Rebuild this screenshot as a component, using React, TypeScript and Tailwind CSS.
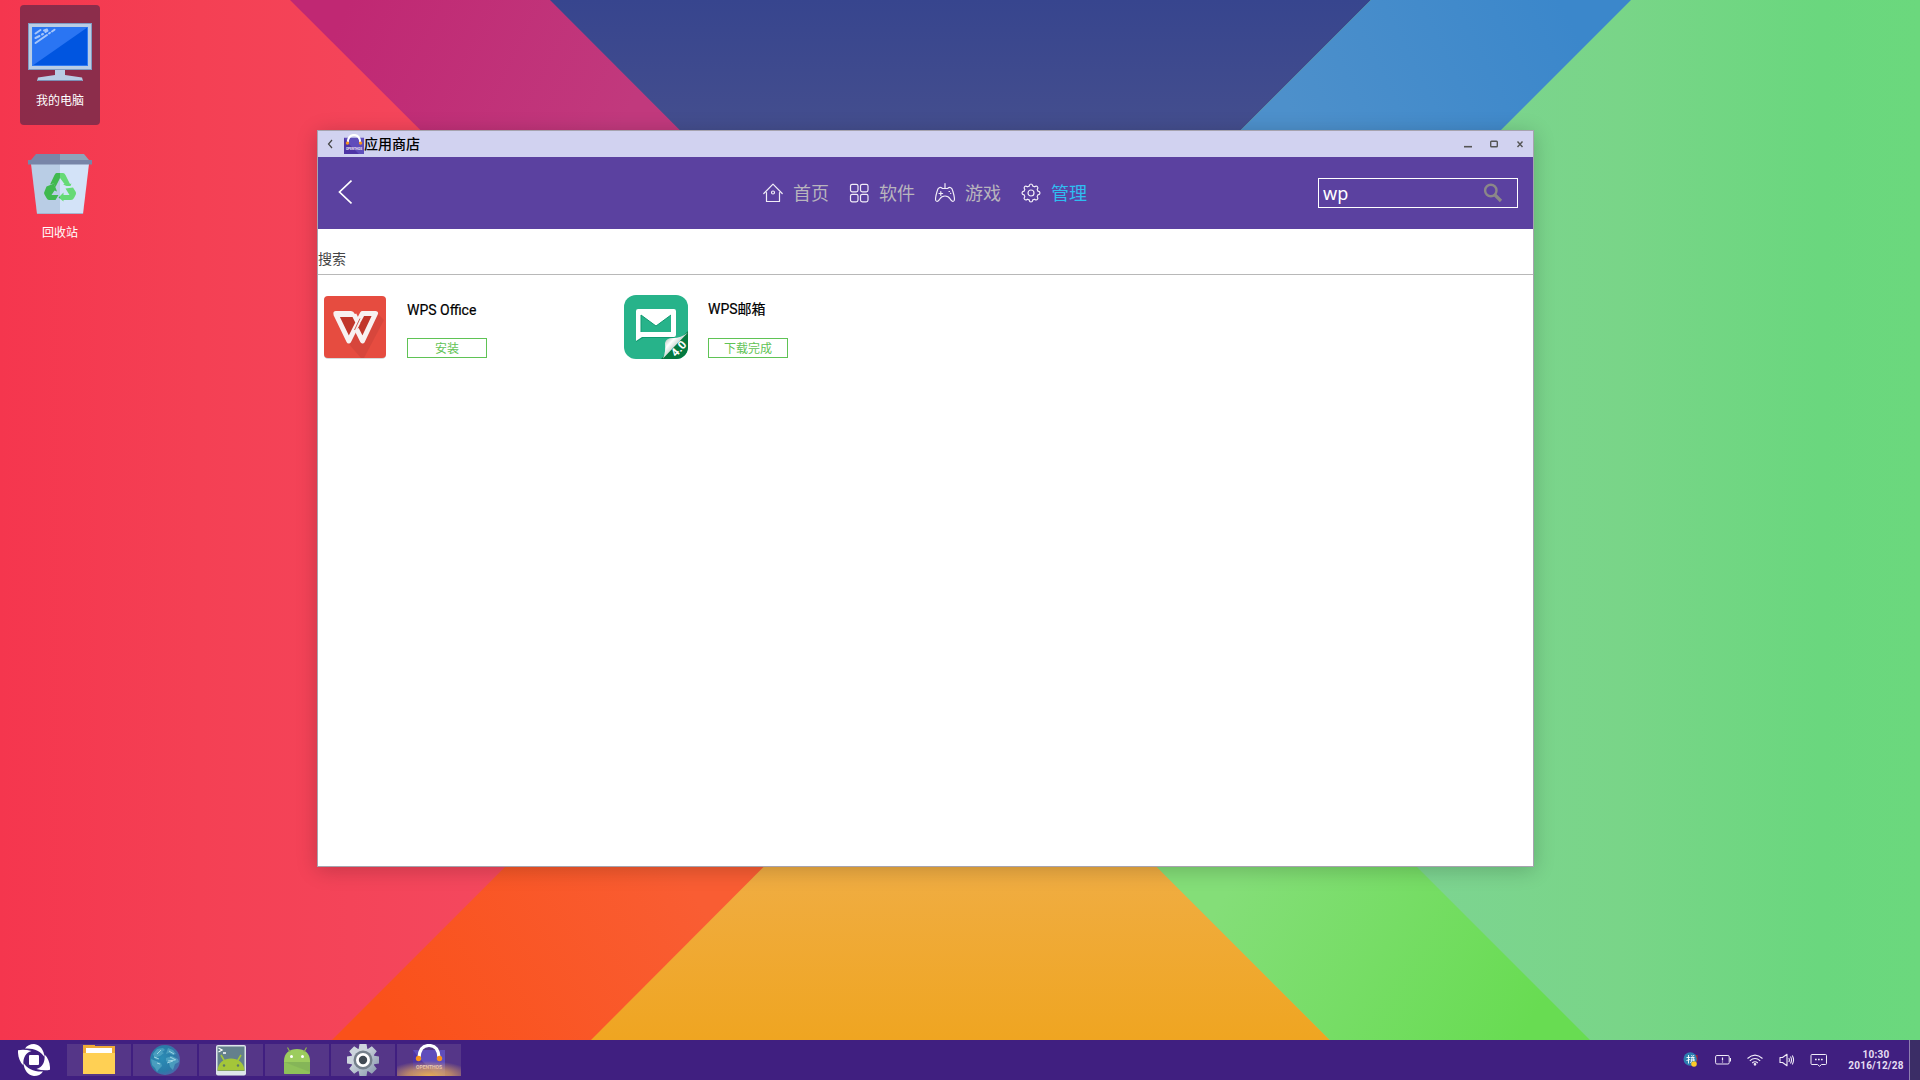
import type { ReactNode } from "react";

function Wallpaper() {
  return (
    <svg className="absolute inset-0" width="1920" height="1040" viewBox="0 0 1920 1040">
      <defs>
        <linearGradient id="red" x1="0" x2="500" y1="0" y2="0" gradientUnits="userSpaceOnUse">
          <stop offset="0" stopColor="#f5364e" />
          <stop offset="0.4" stopColor="#f44054" />
          <stop offset="1" stopColor="#f4485e" />
        </linearGradient>
        <linearGradient id="green" x1="1420" x2="1920" y1="0" y2="0" gradientUnits="userSpaceOnUse">
          <stop offset="0" stopColor="#7dd491" />
          <stop offset="0.4" stopColor="#79d588" />
          <stop offset="0.8" stopColor="#6ad77e" />
          <stop offset="1" stopColor="#6bd87d" />
        </linearGradient>
        <linearGradient id="magenta" x1="350" x2="620" y1="0" y2="130" gradientUnits="userSpaceOnUse">
          <stop offset="0" stopColor="#c02873" />
          <stop offset="1" stopColor="#c1397d" />
        </linearGradient>
        <linearGradient id="navy" x1="0" x2="0" y1="0" y2="130" gradientUnits="userSpaceOnUse">
          <stop offset="0" stopColor="#37458e" />
          <stop offset="1" stopColor="#444e8e" />
        </linearGradient>
        <linearGradient id="sky" x1="1300" x2="1560" y1="130" y2="0" gradientUnits="userSpaceOnUse">
          <stop offset="0" stopColor="#4d90cb" />
          <stop offset="1" stopColor="#3b87cb" />
        </linearGradient>
        <linearGradient id="orange" x1="400" x2="680" y1="1040" y2="870" gradientUnits="userSpaceOnUse">
          <stop offset="0" stopColor="#fa511a" />
          <stop offset="1" stopColor="#f95d33" />
        </linearGradient>
        <linearGradient id="amber" x1="0" x2="0" y1="867" y2="1040" gradientUnits="userSpaceOnUse">
          <stop offset="0" stopColor="#f0ad43" />
          <stop offset="1" stopColor="#efa521" />
        </linearGradient>
        <linearGradient id="lime" x1="1240" x2="1520" y1="870" y2="1040" gradientUnits="userSpaceOnUse">
          <stop offset="0" stopColor="#84de78" />
          <stop offset="1" stopColor="#68dc52" />
        </linearGradient>
      </defs>
      <rect width="960" height="1040" fill="url(#red)" />
      <rect x="960" width="960" height="1040" fill="url(#green)" />
      <path d="M290 0H551L811 260V520Z" fill="url(#magenta)" />
      <path d="M550 0H1371L960 411Z" fill="url(#navy)" />
      <path d="M1371 0H1631L1111 520V260Z" fill="url(#sky)" />
      <path d="M332 1040H592L852 780V520Z" fill="url(#orange)" />
      <path d="M591 1040H1330L960 670Z" fill="url(#amber)" />
      <path d="M1330 1040H1590L1070 520V780Z" fill="url(#lime)" />
    </svg>
  );
}

function ComputerIcon() {
  return (
    <svg width="64" height="64" viewBox="0 0 64 64">
      <path d="M27 48h10v7l17 2.500 1 3.500H9l1-3.500 17-2.500Z" fill="#b9cde5" />
      <path d="M9.500 60.500h45" stroke="#7b8fb5" />
      <path d="M27 49.500h10" stroke="#7b8fb5" />
      <rect x="0.500" y="3.500" width="63" height="46" fill="#b9cde5" stroke="#7f9cc4" />
      <rect x="4" y="7" width="56" height="39" fill="#0055e0" />
      <path d="M4 7h56L4 46Z" fill="#2a75f3" />
      <path d="M4 45.500h56M4.500 7v39M59.500 7v39" stroke="#2f7af2" fill="none" />
      <path d="M7.500 13.500l5-3.500M16 10.500l3-1M7.500 18l4-2M14 14.500l1-.500M17.500 12l2-1.300M7.500 23L19 15M21 13.500l1-.700M24 11.500l2.500-1.800" stroke="#a6c6fa" strokeWidth="2" strokeLinecap="round" />
    </svg>
  );
}

function TrashIcon() {
  return (
    <svg width="64" height="64" viewBox="0 0 64 64">
      <defs>
        <linearGradient id="recycle" x1="0" x2="64" y1="0" y2="0" gradientUnits="userSpaceOnUse">
          <stop offset=".5" stopColor="#3fb94f" />
          <stop offset=".5" stopColor="#66da76" />
        </linearGradient>
      </defs>
      <path d="M3 12h29v50H9Z" fill="#b9cde5" />
      <path d="M32 12h29l-6 50H32Z" fill="#d3e3f8" />
      <path d="M9 61.500h46" stroke="#a5b4d0" />
      <path d="M3 8l5-6h24v6Z" fill="#7a86a8" />
      <path d="M32 2h24l5 6H32Z" fill="#8fa3ba" />
      <rect y="8" width="64" height="4.500" fill="#7785a8" />
      <g fill="url(#recycle)">
        <path d="M28.500 21H35q1.500 0 2.500 2l4.500 9 1.500-.5-1 2.500h-4l-3.500-1.500 1.500-.5L32 26l-4.500 9-2-3.500-3.500 1 4.500-9.500Q27.500 21 28.500 21Z" />
        <path d="M18.500 34.500l7.500-3 3 8-2.500-1-3 4.500h7l-3 5h-6.500q-1.500 0-2.500-2l-2-3.500q-1-1.500 0-3Z" />
        <path d="M37.500 36.500l7.500-1 2.800 4.500q.5 1.200 0 2.500L46 46q-1 2-3 2h-7.500v1.500L30.500 45.500l5-5V43h6Z" />
      </g>
    </svg>
  );
}

function DesktopItem({ label, selected, children }: { label: string; selected?: boolean; children: ReactNode }) {
  return (
    <div className={`flex h-[120px] w-20 flex-col items-center rounded pt-[15px] ${selected ? "bg-[#232046]/50" : ""}`}>
      {children}
      <span className="mt-2 text-[12px] leading-[18px] text-white">{label}</span>
    </div>
  );
}

function BagIcon({ size }: { size: number }) {
  return (
    <svg width={size} height={size} viewBox="0 0 32 32" className="block shrink-0">
      <path d="M0 6h32v26H0Z" fill="#5f4dbb" />
      <path d="M6 14L24 32H0V6Z" fill="#4a2ea0" fillOpacity=".8" />
      <path d="M6 13.500C6.500 5 10 1.500 16 1.500S25.500 5 26 13.500" stroke="#fff" strokeWidth="3.200" fill="none" />
      <circle cx="5.500" cy="14.500" r="2.700" fill="#f7931e" />
      <circle cx="26.500" cy="14.500" r="2.700" fill="#f7931e" />
      <text x="16" y="25" fontSize="5" textAnchor="middle" fill="#efe6f5" fontFamily="Roboto, sans-serif" fontWeight="700" textLength="26">OPENTHOS</text>
    </svg>
  );
}

const stroke = { fill: "none", stroke: "#f1edf7", strokeWidth: 1.2, strokeLinejoin: "round", strokeLinecap: "round" } as const;

function HomeIcon() {
  return (
    <svg width="20" height="20" viewBox="0 0 20 20" {...stroke}>
      <path d="M.8 10.500L10 1.200l9.200 9.300M3.500 9.500v9h13v-9" />
      <circle cx="10" cy="9.500" r="1.500" />
    </svg>
  );
}
function GridIcon() {
  return (
    <svg width="20" height="20" viewBox="0 0 20 20" {...stroke}>
      <rect x="1.500" y="1.300" width="7.500" height="7.500" rx="1.800" />
      <rect x="11.500" y="1.300" width="7.500" height="7.500" rx="1.800" />
      <rect x="1.500" y="11.300" width="7.500" height="7.500" rx="1.800" />
      <rect x="11.500" y="11.300" width="7.500" height="7.500" rx="1.800" />
    </svg>
  );
}
function GameIcon() {
  return (
    <svg width="20" height="20" viewBox="0 0 20 20" {...stroke}>
      <path d="M10 .6v4.400M10 5.500H7.500C5 3.500 3 4.500 2.200 8 1 12 0 16 .8 17.500c1 1.500 2.500 1 4-1.500 1.500-2.500 3-3 5.200-3s3.700.5 5.200 3c1.500 2.500 3 3 4 1.500.8-1.500-.2-5.500-1.400-9.500C17 4.500 15 3.500 12.500 5.500Z" />
      <path d="M4 10.500h3.600M5.800 8.700v3.600M14 8.500h.500M15.500 10.300h.300" />
    </svg>
  );
}
function GearIcon() {
  return (
    <svg width="20" height="20" viewBox="0 0 20 20" {...stroke}>
      <path d="M8.200 3.100Q8.400 1 10 1t1.800 2.100l1.800.7Q15.200 2.500 16.400 3.600t-.2 2.800l.7 1.800Q19 8.400 19 10t-2.100 1.800l-.7 1.800Q17.500 15.200 16.400 16.400t-2.800-.2l-1.800.7Q11.600 19 10 19t-1.800-2.100l-1.800-.7Q4.800 17.500 3.600 16.400t.2-2.800l-.7-1.800Q1 11.600 1 10t2.100-1.800l.7-1.800Q2.500 4.800 3.600 3.600t2.800.2Z" />
      <circle cx="10" cy="10" r="3" />
    </svg>
  );
}

const navItems = [
  { label: "首页", icon: <HomeIcon /> },
  { label: "软件", icon: <GridIcon /> },
  { label: "游戏", icon: <GameIcon /> },
  { label: "管理", icon: <GearIcon />, active: true },
];

function WpsIcon() {
  return (
    <svg width="64" height="64" viewBox="0 0 64 64" className="block">
      <rect x="1" y="1.700" width="62" height="62" rx="4" fill="#c9cfd0" />
      <rect x="1" y="1" width="62" height="62" rx="4" fill="#e64c40" />
      <path d="M55 19l6 6-20 38H38L24 47Z" fill="#d0443a" fillOpacity=".7" />
      <path d="M14 20h15l4 4 4-4h14L41 46 32 34 26 46Z" fill="#c1352a" />
      <path d="M12.500 18.500L25.800 46 35 27.500 31 19.500" fill="none" stroke="#f8f1f1" strokeWidth="5" strokeLinejoin="round" />
      <path d="M10.300 18.500q0-2.500 2.500-2.500H28q2.500 0 3.500 2.500L33.500 22H13Z" fill="#f8f1f1" />
      <path d="M33.500 34L39.500 46 52.500 18.500H39.500L35.500 26" fill="none" stroke="#f8f1f1" strokeWidth="5" strokeLinejoin="round" />
      <path d="M37 23.500L31.500 35" fill="none" stroke="#c1352a" strokeWidth=".8" />
    </svg>
  );
}

function MailIcon() {
  return (
    <svg width="64" height="64" viewBox="0 0 64 64" className="block">
      <defs>
        <clipPath id="mailClip"><rect width="64" height="64" rx="12" /></clipPath>
        <linearGradient id="curl" x1="40" y1="44" x2="52" y2="55" gradientUnits="userSpaceOnUse">
          <stop offset="0" stopColor="#a9bcb2" />
          <stop offset=".45" stopColor="#fff" />
          <stop offset="1" stopColor="#b3c4bb" />
        </linearGradient>
      </defs>
      <g clipPath="url(#mailClip)">
        <rect width="64" height="64" fill="#27b38a" />
        <path d="M12 47V17q0-3 3-3h34q3 0 3 3v23q0 3-3 3H19Z" fill="#109a70" />
        <path d="M12 46V16q0-2 2-2h36q2 0 2 2v24q0 2-2 2H18Z" fill="#fff" />
        <path d="M17 20l15 11 15-11v17H17Z" fill="#27b38a" />
        <path d="M17 37V20l15 11 15-11" fill="none" stroke="#109a70" />
        <path d="M64 36v28H37Z" fill="#04793f" />
        <path d="M64 37.500Q57 43 49 43q-7 0-8 5 1 9-2 15.500L49 53Z" fill="url(#curl)" />
        <text transform="translate(52 62.500) rotate(-48)" fontSize="11.500" fontWeight="700" fill="#fff" fontFamily="Roboto, sans-serif">4.0</text>
      </g>
    </svg>
  );
}

function AppCard({ icon, name, action, nameClass }: { icon: ReactNode; name: string; action: string; nameClass: string }) {
  return (
    <div className="flex w-[301px] gap-5 pl-[5px]">
      {icon}
      <div className={`flex flex-col justify-between pb-px ${nameClass}`}>
        <span className="whitespace-nowrap text-[14px] leading-5 text-black [-webkit-text-stroke:0.2px_#000]">{name}</span>
        <button className="flex h-5 w-20 items-center justify-center border border-[#5fc355] pt-px text-[12px] leading-none text-[#5fc355]">{action}</button>
      </div>
    </div>
  );
}

function StoreWindow() {
  return (
    <div className="absolute left-[317px] top-[130px] flex h-[737px] w-[1217px] flex-col border border-[#a6a3ae] bg-white shadow-[0_3px_20px_rgba(0,0,0,0.2)]">
      <div className="flex h-[26px] shrink-0 items-center bg-[#d1d2f0] pl-2">
        <svg width="8" height="10" viewBox="0 0 8 10" fill="none" stroke="#444" strokeWidth="1.200"><path d="M6 1L2.500 5 6 9" /></svg>
        <div className="ml-[10px] mt-[-1px]"><BagIcon size={20} /></div>
        <span className="text-[14px] font-medium leading-[26px] text-black">应用商店</span>
        <div className="ml-auto flex items-center pr-[9px]">
          <svg width="60" height="10" viewBox="0 0 60 10" fill="none" stroke="#555">
            <path d="M0 7.700h8" strokeWidth="1.600" />
            <rect x="26.700" y="2.200" width="6.600" height="5.600" rx=".8" strokeWidth="1.400" />
            <path d="M53.500 2.500l5 5.500M58.500 2.500l-5 5.500" strokeWidth="1.400" />
          </svg>
        </div>
      </div>
      <div className="grid h-[72px] shrink-0 grid-cols-[445px_1fr_215px] items-center bg-[#5b41a0]">
        <svg width="14" height="26" viewBox="0 0 14 26" className="mb-[2px] ml-5" fill="none" stroke="#fff" strokeWidth="1.700"><path d="M13.500 1.500L1.500 13l12 11.500" /></svg>
        <nav className="flex gap-5">
          {navItems.map((n) => (
            <div key={n.label} className="flex items-center gap-2.5">
              {n.icon}
              <span className={`mt-0.5 text-[18px] leading-6 ${n.active ? "text-[#2fbdf0]" : "text-[#b9b5bd]"}`}>{n.label}</span>
            </div>
          ))}
        </nav>
        <div className="flex h-[30px] w-[200px] items-center justify-between border border-white pl-1 pr-[14px]">
          <span className="font-['Noto_Sans'] text-[18px] leading-7 text-white">wp</span>
          <svg width="20" height="20" viewBox="0 0 20 20" fill="none" stroke="#8b8788">
            <circle cx="7.800" cy="7.500" r="5.700" strokeWidth="2.400" />
            <path d="M12 12l6 6" strokeWidth="3.200" />
          </svg>
        </div>
      </div>
      <div className="flex h-[46px] shrink-0 items-end border-b border-[#b8b8b8] pb-[5px]">
        <span className="text-[14px] leading-5 text-[#444]">搜索</span>
      </div>
      <div className="flex pt-5">
        <AppCard icon={<WpsIcon />} name="WPS Office" action="安装" nameClass="pt-[5px]" />
        <AppCard icon={<MailIcon />} name="WPS邮箱" action="下载完成" nameClass="pt-1" />
      </div>
    </div>
  );
}

function StartLogo() {
  return (
    <svg width="32" height="32" viewBox="0 0 32 32" fill="#fff">
      {["rotate(0 16 16)", "rotate(180 16 16)"].map((t) => (
        <g key={t} transform={t}>
          <path d="M7 4.500C9 1.500 12 0 16 0C22 .5 26 6 26.500 13C23 7.500 16 4 7 4.500Z" />
          <path d="M0 6.300Q6 5 13.500 7C7 9 4.800 14.500 5.500 21.500C1.500 18-.3 12 0 6.300Z" />
        </g>
      ))}
      <rect x="11" y="11" width="10" height="10" rx="1" />
    </svg>
  );
}

function FolderIcon() {
  return (
    <svg width="32" height="32" viewBox="0 0 32 32">
      <path d="M0 1h12v1h20v12H0Z" fill="#efab38" />
      <rect y="9" width="32" height="21" fill="#ffd054" />
      <rect x="3" y="4" width="26" height="5" fill="#fff" />
    </svg>
  );
}

function GlobeIcon() {
  return (
    <svg width="32" height="32" viewBox="0 0 32 32">
      <defs>
        <radialGradient id="globe" cx=".4" cy=".45" r=".65">
          <stop offset="0" stopColor="#2b8cb5" />
          <stop offset=".65" stopColor="#2a7ba8" />
          <stop offset="1" stopColor="#5263ac" />
        </radialGradient>
      </defs>
      <circle cx="16" cy="16" r="15" fill="url(#globe)" />
      <path d="M4 10l4-5 6-1 2 2-3 2 2 1-4 3-3 1 1 3-3-1ZM19 4l5 2 3 4-3 1-4-2-3 1 1-3ZM2 15l5 2 5 2 1 3-3 3-2 3-2-4-3-3ZM17 14l6-2 6 3 1 3-4 2-2 6-3-3-1-4-3-2Z" fill="#5fb0cc" fillOpacity=".6" />
      <path d="M5 13l5 2M8 19l3 1M19 17l7-1M21 13l6 3M12 6l-4 4M18 19l6-2M20 7l5 3" stroke="#b4e2ee" strokeWidth=".8" />
    </svg>
  );
}

function TerminalIcon() {
  return (
    <svg width="32" height="32" viewBox="0 0 32 32">
      <rect x="1" y="1" width="30" height="30.500" rx="2" fill="#dde5ea" />
      <rect x="2.500" y="2.500" width="27" height="24.500" fill="#64808c" />
      <path d="M2.500 26.500C3 18.500 9 14.500 16 14.500s13 4 13.500 12Z" fill="#a4c639" />
      <path d="M9.500 17L6 11M22.500 17L26 11" stroke="#a4c639" strokeWidth="1.600" />
      <circle cx="9" cy="21.500" r="1.200" fill="#5c7a68" />
      <circle cx="23" cy="21.500" r="1.200" fill="#5c7a68" />
      <path d="M3.500 4l3.500 2-3.500 2M8 9h3" stroke="#fff" strokeWidth="1.300" fill="none" />
    </svg>
  );
}

function AndroidIcon() {
  return (
    <svg width="32" height="32" viewBox="0 0 32 32">
      <path d="M3 17C3 9 8.500 5 16 5s13 4 13 12v11.500q0 1.500-1.500 1.500h-23Q3 30 3 28.500Z" fill="#9ccc5e" />
      <path d="M3 18h26v10.500q0 1.500-1.500 1.500h-23Q3 30 3 28.500Z" fill="#8fc15a" />
      <path d="M3 18h26v10Z" fill="#7fae56" fillOpacity=".6" />
      <path d="M9 8L6.500 3.500M23 8l2.500-4.500" stroke="#8fb44e" strokeWidth="1.200" />
      <circle cx="10.500" cy="12.500" r="1.500" fill="#fff" />
      <circle cx="21.500" cy="12.500" r="1.500" fill="#fff" />
    </svg>
  );
}

const gearTeeth = ["rotate(0 16 16)", "rotate(45 16 16)", "rotate(90 16 16)", "rotate(135 16 16)"];

function SettingsIcon() {
  return (
    <svg width="32" height="32" viewBox="0 0 32 32">
      <defs>
        <linearGradient id="gear" x1="5" y1="5" x2="27" y2="27" gradientUnits="userSpaceOnUse">
          <stop offset=".3" stopColor="#cdd5dd" />
          <stop offset="1" stopColor="#94a3b5" />
        </linearGradient>
        <clipPath id="gearShape">
          {gearTeeth.map((t) => (
            <path key={t} transform={t} d="M12.500 0h7l1 6v20l-1 6h-7l-1-6V6Z" />
          ))}
          <circle cx="16" cy="16" r="12" />
        </clipPath>
      </defs>
      <rect width="32" height="32" fill="url(#gear)" clipPath="url(#gearShape)" />
      <circle cx="16" cy="16" r="9.500" fill="#75808b" />
      <circle cx="16" cy="16" r="7" fill="#fff" />
      <circle cx="16" cy="16" r="4.200" fill="#414a53" />
    </svg>
  );
}

const taskIcons = [<FolderIcon />, <GlobeIcon />, <TerminalIcon />, <AndroidIcon />, <SettingsIcon />, <BagIcon size={32} />];

function Tray() {
  return (
    <div className="ml-auto flex h-10 items-center">
      <svg width="16" height="16" viewBox="0 0 16 16" className="mr-[16px]">
        <path d="M10 3h4.500v6l-2 2Z" fill="#b52025" />
        <circle cx="7.200" cy="7" r="6.700" fill="#2d7eb0" />
        <path d="M5.500 3v8.500M3.500 5.500h4M3.500 8.500l3.500-1M8.500 3l.8 1.500M11 3l-1 1.500M8 5.500h3.500M7.500 8h4.500M9 5.500Q9 9.500 7.500 11M10.700 5.500V9" stroke="#fff" fill="none" strokeWidth=".9" />
        <circle cx="11" cy="12" r="2.800" fill="#ffca28" />
      </svg>
      <svg width="16" height="16" viewBox="0 0 16 16" className="mr-[16px]" fill="none" stroke="#f1ecf8">
        <rect x=".6" y="3.500" width="13.600" height="8.500" rx="1.300" />
        <path d="M15.500 6v3.500M7.500 5.500v3M7.500 9.500v1" strokeWidth="1.200" />
      </svg>
      <svg width="16" height="16" viewBox="0 0 16 16" className="mr-[16px]" fill="none" stroke="#f1ecf8" strokeWidth="1.100">
        <path d="M.5 6.500Q8-.3 15.500 6.500M2.800 8.800Q8 4.200 13.200 8.800M5.200 11Q8 8.600 10.800 11" />
        <circle cx="8" cy="12.300" r=".8" fill="#f1ecf8" />
      </svg>
      <svg width="16" height="16" viewBox="0 0 16 16" className="mr-[15px]" fill="none" stroke="#f1ecf8" strokeWidth="1.100">
        <path d="M1 5.500h2.500L8 2.300v11.400l-4.500-3.200H1Z" strokeLinejoin="round" />
        <path d="M9.800 6q1.200 2 0 4M11.500 4.500q2 3.500 0 7M13.300 3.500q2.500 4.500 0 9" />
      </svg>
      <svg width="18" height="16" viewBox="0 0 18 16" className="mr-[19px]" fill="none" stroke="#f1ecf8">
        <path d="M2 2.500h13.500q1 0 1 1v8q0 1-1 1h-4l-2 1.800-2-1.800H2q-1 0-1-1v-8q0-1 1-1Z" />
        <path d="M5 7.500h1.700M8 7.500h1.700M11 7.500h1.700" strokeWidth="1.600" />
      </svg>
      <div className="flex w-[58px] flex-col items-center text-[10px] font-bold leading-[11px] tracking-[0.2px] text-[#e6def2]">
        <span>10:30</span>
        <span>2016/12/28</span>
      </div>
      <div className="ml-1 h-10 w-[11px] border-l border-[#8f7fb0] bg-[#3b2d66]" />
    </div>
  );
}

function Taskbar() {
  return (
    <div className="absolute inset-x-0 bottom-0 flex h-10 items-center bg-[#401f80]">
      <div className="ml-[18px] mr-[17px]"><StartLogo /></div>
      <div className="flex gap-0.5">
        {taskIcons.map((icon, i) => (
          <div key={i} className="relative flex h-8 w-16 items-center justify-center bg-[#553688]">
            {icon}
            {i === 5 && (
              <div className="absolute inset-0 bg-[radial-gradient(ellipse_44px_15px_at_50%_100%,rgba(240,180,80,0.95)_0%,rgba(225,165,95,0.7)_50%,rgba(200,140,100,0)_100%)]" />
            )}
          </div>
        ))}
      </div>
      <Tray />
    </div>
  );
}

export default function App() {
  return (
    <div className="relative h-[1080px] w-[1920px] overflow-hidden font-[Roboto,'Noto_Sans_CJK_SC',sans-serif]">
      <Wallpaper />
      <div className="relative flex w-fit flex-col gap-3 pl-5 pt-[5px]">
        <DesktopItem label="我的电脑" selected><ComputerIcon /></DesktopItem>
        <DesktopItem label="回收站"><TrashIcon /></DesktopItem>
      </div>
      <StoreWindow />
      <Taskbar />
    </div>
  );
}
